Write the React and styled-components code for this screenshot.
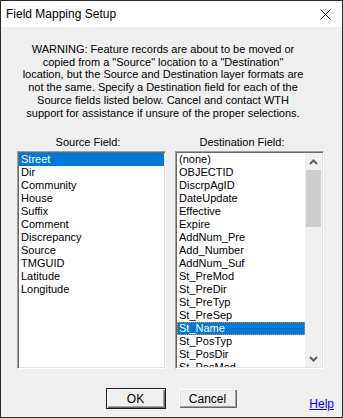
import React from "react";
import styled, { createGlobalStyle } from "styled-components";

const GlobalStyle = createGlobalStyle`
  html, body {
    margin: 0;
    padding: 0;
    background: #1e1e1e;
  }
  * {
    box-sizing: border-box;
  }
`;

const Window = styled.div`
  width: 343px;
  height: 418px;
  display: flex;
  flex-direction: column;
  border: 1px solid #2a2a2a;
  background: #f0f0f0;
  font-family: "Liberation Sans", Arial, sans-serif;
  font-size: 11px;
  color: #000;
`;

const TitleBar = styled.div`
  height: 26px;
  display: flex;
  align-items: center;
  justify-content: space-between;
  padding: 0 11px 0 5px;
  background: #fff;
  font-size: 12px;
`;

const Body = styled.div`
  flex: 1;
  display: flex;
  flex-direction: column;
  padding: 16px 15px 0 16px;
`;

const Warning = styled.div`
  width: 292px;
  text-align: center;
  line-height: 12.7px;
  white-space: nowrap;
`;

const Columns = styled.div`
  display: grid;
  grid-template-columns: 149px 149px;
  column-gap: 9px;
  margin-top: 17px;
`;

const Label = styled.div`
  text-align: center;
  line-height: 13px;
  height: 13px;
  padding-right: ${(p) => p.$shift}px;
  margin-bottom: 2px;
`;

const ListBox = styled.div`
  height: 218px;
  display: flex;
  background: #fff;
  border-top: 1px solid #a0a0a0;
  border-left: 1px solid #a0a0a0;
  border-right: 1px solid #fff;
  border-bottom: 1px solid #fff;
  box-shadow: inset 1px 1px 0 #696969, inset -1px -1px 0 #e3e3e3;
  padding: 1px;
`;

const Items = styled.div`
  flex: 1;
  overflow: hidden;
`;

const Item = styled.div`
  height: 13px;
  line-height: 13px;
  padding-left: ${(p) => (p.$focus ? 1 : 2)}px;
  white-space: nowrap;
  background: ${(p) => (p.$selected ? "#0078d7" : "transparent")};
  color: ${(p) => (p.$selected ? "#fff" : "#000")};
  border: ${(p) => (p.$focus ? "1px dotted #ff8c1a" : "none")};
  line-height: ${(p) => (p.$focus ? 11 : 13)}px;
`;

const ScrollBar = styled.div`
  width: 17px;
  display: flex;
  flex-direction: column;
  background: #f0f0f0;
`;

const ArrowButton = styled.div`
  height: 17px;
  display: flex;
  align-items: center;
  justify-content: center;
`;

const Track = styled.div`
  flex: 1;
  padding: 0 1px;
`;

const Thumb = styled.div`
  height: 57px;
  background: #cdcdcd;
`;

const ButtonRow = styled.div`
  display: grid;
  grid-template-columns: 1fr auto 1fr;
  margin: 19px -15px 0 -16px;
`;

const Buttons = styled.div`
  grid-column: 2;
  display: flex;
  gap: 12px;
`;

const Button = styled.div`
  width: 60px;
  height: 21px;
  display: flex;
  align-items: center;
  justify-content: center;
  background: #f0f0f0;
  border: 1px solid ${(p) => (p.$default ? "#1a1a1a" : "transparent")};
  box-shadow: ${(p) =>
    p.$default
      ? "inset 1px 1px 0 #fff, inset -1px -1px 0 #696969, inset -2px -2px 0 #a0a0a0"
      : "inset 1px 1px 0 #fff, inset -1px -1px 0 #696969, inset -2px -2px 0 #a0a0a0, inset 2px 2px 0 #e3e3e3"};
  font-size: 12px;
`;

const HelpLink = styled.a`
  grid-column: 3;
  justify-self: end;
  align-self: end;
  margin: 0 8px -2px 0;
  color: #0000ff;
  text-decoration: underline;
  font-size: 12px;
  line-height: 13px;
`;

const sourceFields = [
  "Street",
  "Dir",
  "Community",
  "House",
  "Suffix",
  "Comment",
  "Discrepancy",
  "Source",
  "TMGUID",
  "Latitude",
  "Longitude",
];

const destFields = [
  "(none)",
  "OBJECTID",
  "DiscrpAgID",
  "DateUpdate",
  "Effective",
  "Expire",
  "AddNum_Pre",
  "Add_Number",
  "AddNum_Suf",
  "St_PreMod",
  "St_PreDir",
  "St_PreTyp",
  "St_PreSep",
  "St_Name",
  "St_PosTyp",
  "St_PosDir",
  "St_PosMod",
];

const Chevron = ({ up }) => (
  <svg width="9" height="6" viewBox="0 0 9 6">
    <polyline
      points={up ? "1,5 4.5,1.5 8,5" : "1,1 4.5,4.5 8,1"}
      fill="none"
      stroke="#606060"
      strokeWidth="2"
    />
  </svg>
);

const CloseIcon = () => (
  <svg width="11" height="11" viewBox="0 0 11 11">
    <path d="M0.5 0.5 L10.5 10.5 M10.5 0.5 L0.5 10.5" stroke="#000" strokeWidth="1" />
  </svg>
);

export default function App() {
  return (
    <>
      <GlobalStyle />
      <Window>
        <TitleBar>
          <span>Field Mapping Setup</span>
          <CloseIcon />
        </TitleBar>
        <Body>
          <Warning>
            WARNING: Feature records are about to be moved or
            <br />
            copied from a "Source" location to a "Destination"
            <br />
            location, but the Source and Destination layer formats are
            <br />
            not the same. Specify a Destination field for each of the
            <br />
            Source fields listed below. Cancel and contact WTH
            <br />
            support for assistance if unsure of the proper selections.
          </Warning>
          <Columns>
            <div>
              <Label $shift={7}>Source Field:</Label>
              <ListBox>
                <Items>
                  {sourceFields.map((f, i) => (
                    <Item key={f} $selected={i === 0}>
                      {f}
                    </Item>
                  ))}
                </Items>
              </ListBox>
            </div>
            <div>
              <Label $shift={15}>Destination Field:</Label>
              <ListBox>
                <Items>
                  {destFields.map((f) => (
                    <Item key={f} $selected={f === "St_Name"} $focus={f === "St_Name"}>
                      {f}
                    </Item>
                  ))}
                </Items>
                <ScrollBar>
                  <ArrowButton>
                    <Chevron up />
                  </ArrowButton>
                  <Track>
                    <Thumb />
                  </Track>
                  <ArrowButton>
                    <Chevron />
                  </ArrowButton>
                </ScrollBar>
              </ListBox>
            </div>
          </Columns>
          <ButtonRow>
            <Buttons>
              <Button $default>OK</Button>
              <Button>Cancel</Button>
            </Buttons>
            <HelpLink href="#">Help</HelpLink>
          </ButtonRow>
        </Body>
      </Window>
    </>
  );
}
